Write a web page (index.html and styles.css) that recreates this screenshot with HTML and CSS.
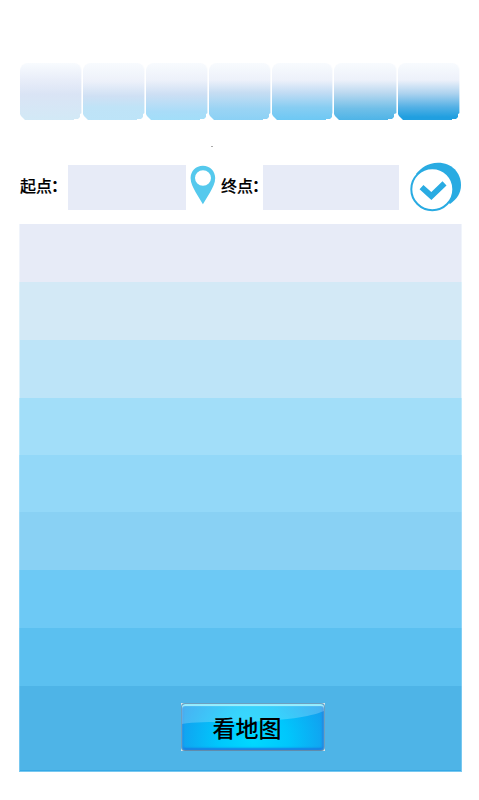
FILE: index.html
```html
<!DOCTYPE html>
<html lang="zh-CN">
<head>
<meta charset="utf-8">
<title>路线</title>
<link rel="stylesheet" href="styles.css">
</head>
<body>
<main class="screen">
  <nav class="tabs">
    <div class="tab tab-1"></div>
    <div class="tab tab-2"></div>
    <div class="tab tab-3"></div>
    <div class="tab tab-4"></div>
    <div class="tab tab-5"></div>
    <div class="tab tab-6"></div>
    <div class="tab tab-7"></div>
  </nav>
  <div class="speck"></div>
  <section class="search">
    <span class="label">起点<b class="colon">：</b></span>
    <div class="field field-start"></div>
    <svg class="pin" width="26" height="40" viewBox="0 0 26 40">
      <path fill="#55c9ed" fill-rule="evenodd" d="M12.9.8C5.9.8.6 6.2.6 13c0 5.300 2.500 9.500 5.200 14.400L12.900 39.200 20 27.400C22.800 22.500 25.200 18.300 25.200 13 25.200 6.200 19.900.8 12.900.8ZM13 5.300a8 7.700 0 1 1 0 15.400a8 7.700 0 1 1 0-15.400Z"/>
    </svg>
    <span class="label label-end">终点<b class="colon">：</b></span>
    <div class="field field-end"></div>
    <svg class="confirm" width="52" height="50" viewBox="0 0 52 50">
      <path fill="#29abe2" d="M6 12C11 6 18 .8 28 .8C42 .8 51 11 51 23C51 31 47 37 40 42Z"/>
      <circle cx="22.300" cy="27.200" r="21" fill="#fff" stroke="#29abe2" stroke-width="2"/>
      <path fill="none" stroke="#29abe2" stroke-width="5.800" d="M11.500 25.200 21.300 34 34.500 21.300"/>
    </svg>
  </section>
  <section class="list">
    <div class="row row-1"></div>
    <div class="row row-2"></div>
    <div class="row row-3"></div>
    <div class="row row-4"></div>
    <div class="row row-5"></div>
    <div class="row row-6"></div>
    <div class="row row-7"></div>
    <div class="row row-8"></div>
    <div class="row row-9">
      <div class="map-frame"><button class="map-button">
        <svg class="gloss" width="142" height="44" viewBox="0 0 142 44">
          <path d="M0 0H142V6C124 14 83 17 47 17C29 17 12 17 0 19Z" fill="#fff" fill-opacity=".22"/>
        </svg>
        <span class="caption">看地图</span>
      </button></div>
    </div>
  </section>
</main>
</body>
</html>
```
FILE: styles.css
```css
* {
  box-sizing: border-box;
}

body {
  margin: 0;
  background: #fff;
  color: #000;
  font-family: "Noto Sans CJK SC", sans-serif;
}

.screen {
  width: 479px;
  height: 800px;
  padding: 63px 17px 0 19px;
  overflow: hidden;
}

.tabs {
  display: grid;
  grid-template-columns: repeat(4, 62px) 61px 63px 62px;
  column-gap: 1px;
  width: 441px;
  height: 57px;
  margin-left: 1px;
}

.tab {
  border-radius: 8px 8px 0 0;
  border-right: 1px solid rgba(255, 255, 255, .6);
  clip-path: polygon(0 0, 100% 0, 100% 50px, 60px 51px, 60px 54px, 58px 56px, 54px 56px, 54px 57px, 5px 57px, 1px 53px, 0 51px);
}

.tab-1 { background: linear-gradient(#f8fbfe, #e9eef9 28%, #dae4f5 55%, #d2e9f6); }
.tab-2 { background: linear-gradient(#f8fbfe, #edf1fa 32%, #cfe0f4 58%, #bfe3f7 78%, #bde4f8); }
.tab-3 { background: linear-gradient(#f8fbfe, #edf1fa 30%, #cddff4 55%, #a9dcf8 85%, #a2def9); }
.tab-4 { background: linear-gradient(#f8fbfe, #edf1fa 30%, #c6ddf3 52%, #9bd4f4 80%, #8bd1f5); }
.tab-5 { background: linear-gradient(#f8fbfe, #edf1fa 30%, #c2dcf4 52%, #87cdf2 78%, #6dc8f4); }
.tab-6 { background: linear-gradient(#f8fbfe, #edf1fa 30%, #bcd9f0 52%, #70bfe8 80%, #4eb4e7); }
.tab-7 { background: linear-gradient(#f8fbfe, #edf1fa 30%, #aed3ef 53%, #52b0e5 78%, #209fe0 95%); }

.speck {
  width: 2px;
  height: 1px;
  margin: 26px 0 0 192px;
  background: #aaa;
}

.search {
  display: flex;
  align-items: flex-start;
  height: 77px;
  padding-top: 15px;
}

.label {
  width: 49px;
  margin-top: 3px;
  padding-left: 1px;
  font-size: 16px;
  font-weight: 500;
  line-height: 40px;
  white-space: nowrap;
  -webkit-text-stroke: .15px #000;
}

.label-end {
  width: 42px;
  padding-left: 0;
  margin-left: 5px;
}

.colon {
  margin-left: -1px;
  font-weight: 700;
}

.field {
  height: 45px;
  margin-top: 3px;
  background: #e7ebf7;
}

.field-start { width: 118px; }
.field-end { width: 136px; }

.pin {
  margin: 3px 0 0 4px;
}

.confirm {
  margin-left: 11px;
}

.label,
.field,
.pin,
.confirm {
  flex-shrink: 0;
}

.list {
  display: grid;
  grid-template-rows: 58px 58px 58px 57px 57px 58px 58px 58px 86px;
  width: 443px;
}

.row {
  border: solid rgba(41, 171, 226, .15);
  border-width: 0 1px;
  background-clip: padding-box;
}

.row-1 { background-color: #e7ebf7; border-color: #f0f4fb; }
.row-2 { background-color: #d3e9f6; }
.row-3 { background-color: #bde4f8; }
.row-4 { background-color: #a2def9; border-color: #bfe9fb; }
.row-5 { background-color: #93d8f8; border-color: #a9e0fa; }
.row-6 { background-color: #89d1f4; border-color: #a4dbf7; }
.row-7 { background-color: #6dc9f5; border-color: #8fd5f7; }
.row-8 { background-color: #5bc0f0; border-color: #80cef3; }
.row-9 {
  display: flex;
  justify-content: center;
  align-items: flex-start;
  padding: 17px 0 0 25px;
  background-color: #4eb4e7;
  border-color: #78c8f0;
  border-bottom: 1px solid #78c8f0;
  box-shadow: inset 0 -1px #35a9e6;
}

.map-frame {
  width: 144px;
  height: 48px;
  background: #dce9ed;
}

.map-button {
  position: relative;
  display: flex;
  align-items: center;
  justify-content: center;
  width: 144px;
  height: 48px;
  padding: 0 12px 1px 0;
  overflow: hidden;
  border: 1px solid #6c9fc0;
  border-bottom-color: #608bad;
  border-radius: 4px;
  background: radial-gradient(ellipse 78px 72px at 50% 80%, #00d8ff, #00c7fc 45%, #149cee);
  box-shadow: inset 0 2px 1px #91edfd, inset 1px 0 2px #278fe6, inset -2px 0 2px #2689df, inset 0 -2px 2px #167be1;
  color: #000;
  font: inherit;
}

.gloss {
  position: absolute;
  top: 1px;
  left: 0;
}

.caption {
  position: relative;
  font-size: 23px;
  font-weight: 500;
  line-height: 40px;
}
```
